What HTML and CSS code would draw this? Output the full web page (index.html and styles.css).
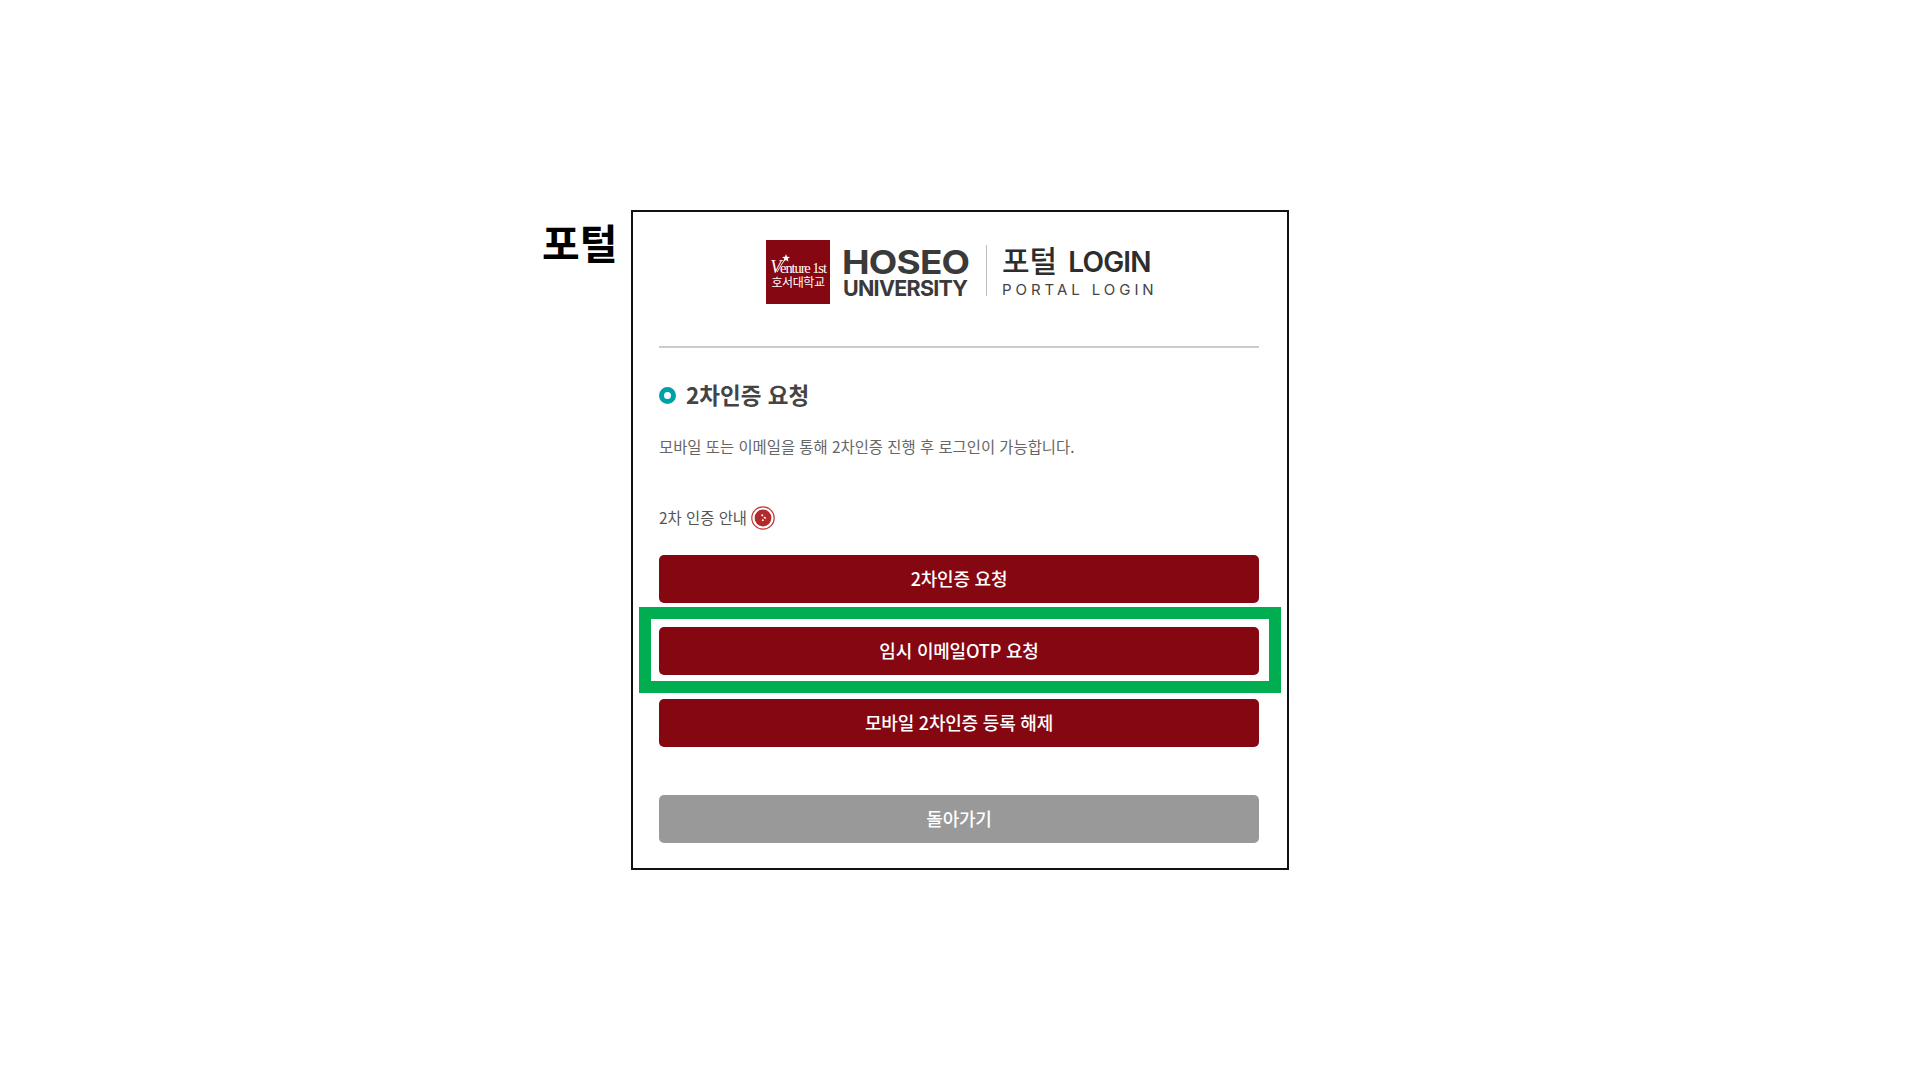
FILE: index.html
```html
<!DOCTYPE html>
<html lang="ko">
<head>
<meta charset="utf-8">
<title>포털 로그인</title>
<link rel="stylesheet" href="styles.css">
</head>
<body>
<main class="page">
  <h1 class="tag">포털</h1>
  <section class="card">
    <header class="logo">
      <div class="mark">
        <svg class="star" viewBox="0 0 20 20" aria-hidden="true"><path d="M3 19 L11 6" fill="none" stroke="#fff" stroke-width="0.9"/><path d="M12 1 L13 3.8 L16 4 L13.7 5.8 L14.5 8.7 L12 7 L9.5 8.7 L10.3 5.8 L8 4 L11 3.8 Z" fill="#fff"/></svg>
        <span class="mark-en"><span class="mark-v">V</span>enture 1st</span>
        <span class="mark-ko">호서대학교</span>
      </div>
      <div class="brand">
        <span class="brand-top">HOSEO</span>
        <span class="brand-sub">UNIVERSITY</span>
      </div>
      <div class="logo-sep"></div>
      <div class="portal">
        <span class="portal-top">포털<span class="portal-login">LOGIN</span></span>
        <span class="portal-sub">PORTAL LOGIN</span>
      </div>
    </header>
    <hr class="rule">
    <h2 class="title"><span class="dot"></span>2차인증 요청</h2>
    <p class="desc">모바일 또는 이메일을 통해 2차인증 진행 후 로그인이 가능합니다.</p>
    <div class="guide">
      <span>2차 인증 안내</span>
      <span class="guide-icon"><svg viewBox="0 0 24 24" aria-hidden="true"><circle cx="12" cy="12" r="11.2" fill="none" stroke="#c0393b" stroke-width="1.2"/><circle cx="12" cy="12" r="8.4" fill="#b32a2c"/><path d="M10.6 8.6 L14 12 L10.6 15.4" fill="none" stroke="#fff" stroke-width="1.7" stroke-dasharray="1.7 1.8"/></svg></span>
    </div>
    <div class="actions">
      <a class="btn">2차인증 요청</a>
      <div class="btn-wrap">
        <span class="highlight"></span>
        <a class="btn">임시 이메일OTP 요청</a>
      </div>
      <a class="btn">모바일 2차인증 등록 해제</a>
      <a class="btn btn-grey">돌아가기</a>
    </div>
  </section>
</main>
</body>
</html>
```

FILE: styles.css
```css
* { box-sizing: border-box; }
html, body { margin: 0; padding: 0; background: #fff; }
body {
  width: 1920px;
  height: 1080px;
  overflow: hidden;
  font-family: "Noto Sans CJK KR", "Noto Sans", sans-serif;
}
.page {
  display: flex;
  align-items: flex-start;
  padding: 210px 0 0 542px;
}
.tag {
  width: 89px;
  margin: 0;
  padding-top: 4px;
  font-size: 41px;
  line-height: 54px;
  font-weight: 700;
  color: #000;
}
.card {
  width: 658px;
  height: 660px;
  border: 2px solid #111;
  padding: 0 26px;
  background: #fff;
}
.logo {
  display: flex;
  align-items: flex-start;
  height: 92px;
  padding: 28px 0 0 107px;
}
.mark {
  width: 64px;
  height: 64px;
  background: #850712;
  color: #fff;
  display: flex;
  flex-direction: column;
  align-items: center;
  padding-top: 20px;
  position: relative;
}
.star {
  position: absolute;
  left: 8px;
  top: 13px;
  width: 20px;
  height: 20px;
}
.mark-en {
  font-family: "Liberation Serif", serif;
  font-size: 14.5px;
  line-height: 14px;
  letter-spacing: -1.1px;
  white-space: nowrap;
}
.mark-v {
  font-size: 18px;
  font-style: italic;
}
.mark-ko {
  font-size: 12px;
  line-height: 13px;
  letter-spacing: -0.4px;
  white-space: nowrap;
}
.brand {
  margin-left: 12px;
  width: 131px;
  display: flex;
  flex-direction: column;
  color: #3a3a3a;
  font-family: "Inter", "Liberation Sans", sans-serif;
}
.brand-top {
  font-size: 33px;
  font-weight: 700;
  line-height: 24px;
  letter-spacing: -0.7px;
  margin-top: 10px;
  transform: scaleX(1.12);
  transform-origin: left center;
}
.brand-sub {
  font-size: 21.5px;
  font-weight: 700;
  line-height: 16px;
  letter-spacing: -0.75px;
  margin-left: 1px;
  margin-top: 6px;
}
.logo-sep {
  width: 1px;
  height: 51px;
  margin: 5px 15px 0 13px;
  background: #bdbdbd;
}
.portal {
  display: flex;
  flex-direction: column;
  width: 152px;
}
.portal-top {
  font-size: 30px;
  font-weight: 500;
  line-height: 34px;
  margin-top: 2px;
  white-space: nowrap;
  color: #2d2d2d;
}
.portal-login {
  margin-left: 11px;
  font-family: "Inter", "Liberation Sans", sans-serif;
  font-size: 28px;
  font-weight: 600;
  letter-spacing: -0.8px;
}
.portal-sub {
  font-family: "Inter", "Liberation Sans", sans-serif;
  font-size: 15px;
  font-weight: 400;
  line-height: 14px;
  margin-top: 4px;
  letter-spacing: 3.95px;
  white-space: nowrap;
  color: #444;
}
.rule {
  margin: 42px 0 0 0;
  border: 0;
  height: 2px;
  width: 600px;
  background: #ccc;
}
.title {
  display: flex;
  align-items: center;
  margin: 27px 0 0 0;
  height: 40px;
  padding-bottom: 2px;
  font-size: 22.5px;
  font-weight: 700;
  line-height: 38px;
  color: #444;
}
.dot {
  width: 17px;
  height: 17px;
  margin-top: 2px;
  margin-right: 10px;
  border-radius: 50%;
  border: 5px solid #00a0aa;
  background: #fff;
}
.desc {
  margin: 20px 0 0 0;
  font-size: 15.4px;
  line-height: 22px;
  color: #666;
}
.guide {
  display: flex;
  align-items: center;
  margin-top: 47px;
  height: 26px;
  font-size: 15.4px;
  color: #555;
}
.guide-icon {
  width: 24px;
  height: 24px;
  margin-left: 4px;
  margin-top: 1px;
}
.guide-icon svg { display: block; width: 24px; height: 24px; }
.actions {
  display: flex;
  flex-direction: column;
  gap: 24px;
  margin-top: 25px;
  width: 600px;
}
.btn {
  display: block;
  position: relative;
  height: 48px;
  border-radius: 5px;
  background: #850712;
  color: #fff;
  text-align: center;
  font-size: 18px;
  font-weight: 500;
  line-height: 47px;
  letter-spacing: -0.2px;
}
.btn-wrap { position: relative; }
.highlight {
  position: absolute;
  left: -20px;
  right: -22px;
  top: -20px;
  bottom: -18px;
  border: 12px solid #00ad50;
}
.btn-grey {
  background: #999;
  margin-top: 24px;
}
```
